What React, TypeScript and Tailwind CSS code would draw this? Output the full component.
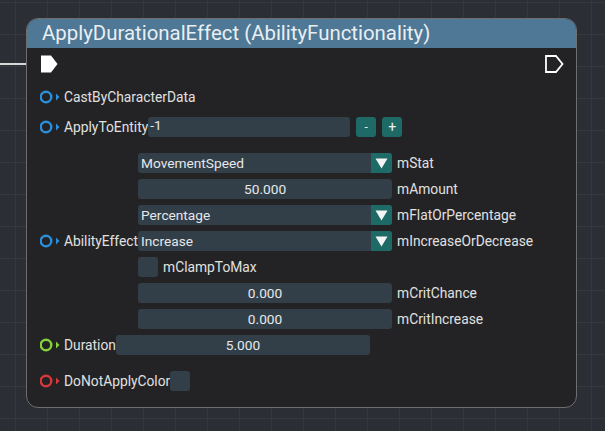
import React from "react";

const font = { fontFamily: "Roboto, 'Noto Sans', sans-serif" };

function Pin({ color }: { color: string }) {
  return (
    <svg width="24" height="14" viewBox="0 0 24 14" className="shrink-0">
      <circle cx="6" cy="7" r="5.3" fill="none" stroke={color} strokeWidth="2.4" />
      <path d="M16 3.5 L19.5 7 L16 10.5 Z" fill={color} />
    </svg>
  );
}

function Dropdown({ value }: { value: string }) {
  return (
    <div className="flex h-[20px] w-[254px] rounded-[3px] bg-[#323f49] overflow-hidden">
      <div className="flex-1 pl-[3px] text-[13.7px] leading-[20px] text-[#e6e8ea]">{value}</div>
      <div className="w-[21px] bg-[#1e6a66] flex items-center justify-center">
        <svg width="13" height="11" viewBox="0 0 13 11">
          <path d="M0.5 0.5 H12.5 L6.5 10.5 Z" fill="#f2f4f5" />
        </svg>
      </div>
    </div>
  );
}

function NumField({ value, w = 254 }: { value: string; w?: number }) {
  return (
    <div
      className="h-[20px] rounded-[3px] bg-[#323f49] text-center text-[13.7px] leading-[20px] text-[#e6e8ea]"
      style={{ width: w }}
    >
      {value}
    </div>
  );
}

function FieldRow({ children, label }: { children: React.ReactNode; label: string }) {
  return (
    <div className="flex items-center h-[20px] gap-[5px]">
      {children}
      <span className="text-[13.8px] text-[#e0e0e0]">{label}</span>
    </div>
  );
}

export default function App() {
  return (
    <div
      className="relative w-[605px] h-[431px] overflow-hidden bg-[#2c2e36] bg-[linear-gradient(to_right,#353741_1px,transparent_1px),linear-gradient(to_bottom,#353741_1px,transparent_1px)] bg-[size:32px_32px] bg-[position:15px_2px]"
      style={font}
    >
      {/* incoming wire */}
      <div className="absolute left-0 top-[63px] w-[33px] h-[1.5px] bg-[#d8d8d8]" />
      <div className="absolute left-[33px] top-[63px] w-[7px] h-[1.5px] bg-[#6a6a6a]" />

      <div className="absolute left-[26px] top-[18px] w-[551px] h-[390px] rounded-[12px] border-[1.5px] border-[#6e6e70] bg-[#232325] overflow-hidden flex flex-col">
        <div className="h-[29px] shrink-0 bg-[#4e7895] pl-[15px] text-[20.4px] leading-[29px] text-[#e9eef2]">
          ApplyDurationalEffect (AbilityFunctionality)
        </div>
        <div className="flex flex-col pl-[13px] pr-[12px]">
          {/* exec row */}
          <div className="mt-[7px] h-[18px] flex justify-between">
            <svg width="17" height="18" viewBox="0 0 17 18" className="ml-[1px]">
              <path d="M0 0.5 H10 L16.5 9 L10 17.5 H0 Z" fill="#ffffff" />
            </svg>
            <svg width="19" height="18" viewBox="0 0 19 18">
              <path d="M1 1 H11 L17.5 9 L11 17 H1 Z" fill="none" stroke="#ffffff" strokeWidth="1.8" />
            </svg>
          </div>

          {/* CastByCharacterData */}
          <div className="mt-[14px] h-[20px] flex items-center">
            <Pin color="#2b8fd8" />
            <span className="text-[13.8px] text-[#e0e0e0]">CastByCharacterData</span>
          </div>

          {/* ApplyToEntity */}
          <div className="mt-[10px] h-[20px] flex items-center">
            <Pin color="#2b8fd8" />
            <span className="text-[13.8px] text-[#e0e0e0]">ApplyToEntity</span>
            <div className="h-[20px] w-[202px] rounded-[3px] bg-[#323f49] pl-[2px] text-[13.7px] leading-[16px] text-[#e6e8ea]">
              -1
            </div>
            <button className="ml-[6px] h-[20px] w-[20px] rounded-[3px] bg-[#1e6a66] text-[12px] leading-[20px] text-[#e8eaea]">
              -
            </button>
            <button className="ml-[6px] h-[20px] w-[20px] rounded-[3px] bg-[#1e6a66] text-[14px] leading-[20px] text-[#f0f2f2]">
              +
            </button>
          </div>

          {/* AbilityEffect */}
          <div className="mt-[16px] flex items-center">
            <Pin color="#2b8fd8" />
            <span className="text-[13.8px] text-[#e0e0e0]">AbilityEffect</span>
            <div className="flex flex-col gap-[6px]">
              <FieldRow label="mStat">
                <Dropdown value="MovementSpeed" />
              </FieldRow>
              <FieldRow label="mAmount">
                <NumField value="50.000" />
              </FieldRow>
              <FieldRow label="mFlatOrPercentage">
                <Dropdown value="Percentage" />
              </FieldRow>
              <FieldRow label="mIncreaseOrDecrease">
                <Dropdown value="Increase" />
              </FieldRow>
              <FieldRow label="mClampToMax">
                <div className="h-[20px] w-[20px] rounded-[3px] bg-[#323f49]" />
              </FieldRow>
              <FieldRow label="mCritChance">
                <NumField value="0.000" />
              </FieldRow>
              <FieldRow label="mCritIncrease">
                <NumField value="0.000" />
              </FieldRow>
            </div>
          </div>

          {/* Duration */}
          <div className="mt-[6px] h-[20px] flex items-center">
            <Pin color="#86d03c" />
            <span className="text-[13.8px] text-[#e0e0e0]">Duration</span>
            <NumField value="5.000" />
          </div>

          {/* DoNotApplyColor */}
          <div className="mt-[16px] h-[20px] flex items-center">
            <Pin color="#d8383a" />
            <span className="text-[13.8px] text-[#e0e0e0]">DoNotApplyColor</span>
            <div className="h-[20px] w-[20px] rounded-[3px] bg-[#323f49]" />
          </div>
        </div>
      </div>
    </div>
  );
}
